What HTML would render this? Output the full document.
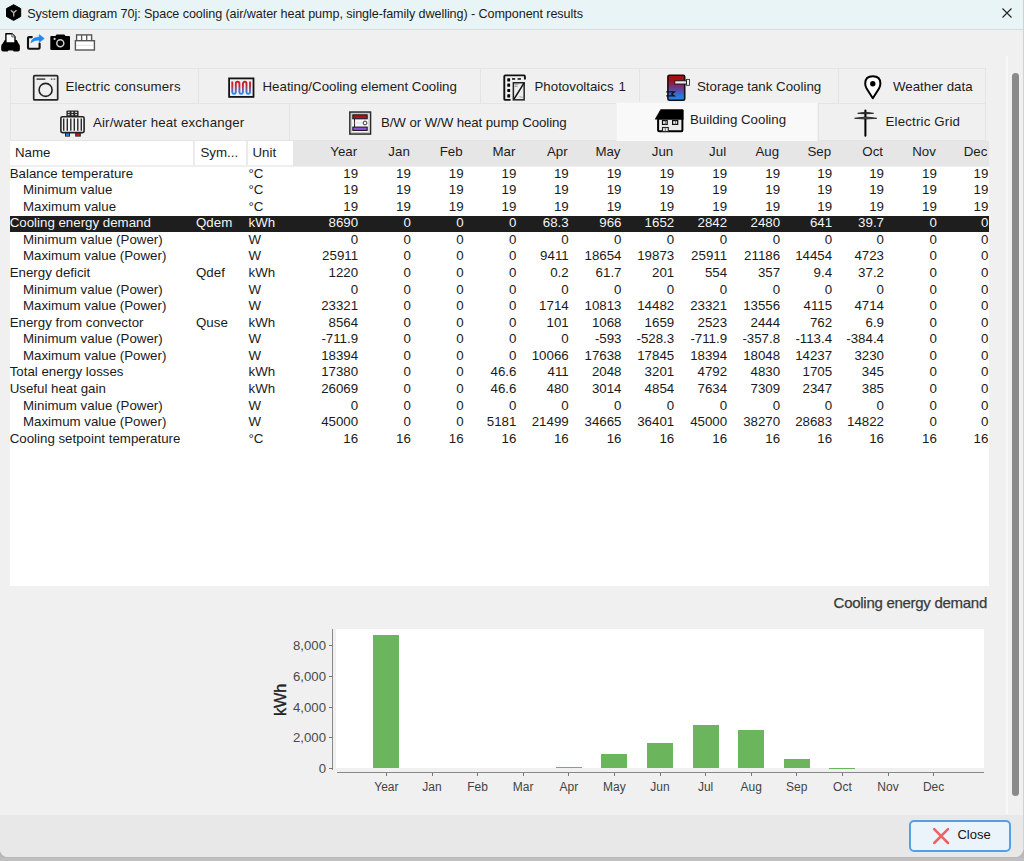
<!DOCTYPE html>
<html><head><meta charset="utf-8">
<style>
html,body{margin:0;padding:0;}
body{width:1024px;height:861px;position:relative;overflow:hidden;background:#b9b9b9;font-family:"Liberation Sans",sans-serif;color:#141414;}
#win{position:absolute;left:0;top:0;width:1023px;height:856.5px;background:#f0f0f0;border-radius:0 0 8px 8px;overflow:hidden;}
#rstrip{position:absolute;left:1023px;top:0;width:1px;height:850px;background:#d2d2d2;}
#bshadow{position:absolute;left:0;top:858px;width:1024px;height:3px;background:#c0c0c0;}
#title{position:absolute;left:0;top:0;width:1023px;height:29px;background:#e8f4f6;border-bottom:1px solid #d8dcdd;}
#title .t{position:absolute;left:27.3px;top:6.8px;font-size:12.6px;letter-spacing:-0.08px;color:#1b1b1b;white-space:nowrap;}
.abs{position:absolute;}
#tabs .tab{position:absolute;box-sizing:border-box;border:1px solid #e4e4e4;background:#f0f0f0;}
#tabs .tab.selt{background:#f9f9f9;border-color:#f2f2f2;border-bottom:none;}
#tabs .tl{position:absolute;font-size:13.3px;white-space:nowrap;color:#1c1c1c;}
#thead{position:absolute;left:0;top:0;width:1024px;height:1px;}
.hw{position:absolute;top:140.7px;height:24px;background:#fff;}
.hg{position:absolute;left:293px;top:140.7px;width:695.5px;height:25.3px;background:#e6e6e6;}
.hsep{position:absolute;top:140.7px;width:2px;height:24px;background:#ebebeb;}
.ht{position:absolute;top:145px;font-size:13.3px;white-space:nowrap;color:#1c1c1c;}
#tbody{position:absolute;left:9.5px;top:164.7px;width:979px;height:421px;background:#fff;border-top:2px solid #efefef;box-sizing:border-box;}
.row{position:absolute;left:0;top:0;width:1024px;height:16.57px;}
.row.sel .bg{display:none}
.c{position:absolute;top:0;font-size:13.3px;line-height:16.57px;white-space:nowrap;color:#1a1a1a;}
.selband{position:absolute;left:9.5px;width:979px;height:16px;background:#1e1e1e;}
.sel .c{color:#f4f4f4;}
.bar{position:absolute;width:26.2px;background:#6bb65c;}
.xt{position:absolute;top:772.5px;width:1px;height:3.5px;background:#777;}
.xl{position:absolute;top:780px;width:60px;text-align:center;font-size:12px;color:#444;}
.yl{position:absolute;right:697px;font-size:13.2px;color:#4a4a4a;white-space:nowrap;}
.yt{position:absolute;left:329px;width:4px;height:1px;background:#777;}
</style></head><body>
<div id="win">
  <div id="title">
    <svg class="abs" style="left:4px;top:2px" width="20" height="22" viewBox="4 2 20 22">
      <polygon points="13.6,4.7 20.7,8.6 20.7,16.5 13.6,20.4 6.5,16.5 6.5,8.6" fill="#000" stroke="#000" stroke-linejoin="round" stroke-width="1"/>
      <path d="M10.9 10.2 L13.7 12.8 L16.5 10.2 M13.7 12.8 V16.6" stroke="#b4b4b4" stroke-width="1.3" fill="none"/>
    </svg>
    <span class="t">System diagram 70j: Space cooling (air/water heat pump, single-family dwelling) - Component results</span>
    <svg class="abs" style="left:1002px;top:8px" width="10" height="10" viewBox="0 0 10 10"><path d="M0.5 0.5 L9.5 9.5 M9.5 0.5 L0.5 9.5" stroke="#222" stroke-width="1.1"/></svg>
  </div>

  <!-- toolbar -->
  <svg class="abs" style="left:0;top:30px" width="100" height="24" viewBox="0 30 100 24">
    <!-- printer -->
    <path d="M4.8 40 H16.8 L18.4 43.2 Q19.9 44.4 19.9 46.5 V49.6 Q19.9 51.6 17.9 51.6 H14.6 Q13.6 51.6 13 50.4 H8.4 Q7.8 51.6 6.6 51.6 H3.2 Q1.2 51.6 1.2 49.6 V46.5 Q1.2 44.4 2.8 43.2 Z" fill="#000"/>
    <path d="M5.9 33.7 H11.9 L15 36.8 V43 H5.9 Z" fill="#fff" stroke="#000" stroke-width="1.4" stroke-linejoin="round"/>
    <path d="M11.8 33.8 V36.9 H15" fill="#e0e0e0" stroke="#444" stroke-width="0.8"/>
    <!-- share -->
    <path d="M31.8 37.1 H29 Q28 37.1 28 38.1 V47.7 Q28 48.7 29 48.7 H38.6 Q39.6 48.7 39.6 47.7 V43.6" fill="none" stroke="#111" stroke-width="2.1" stroke-linecap="round"/>
    <path d="M30.8 42.8 Q31.6 37.3 39.2 37 V34.5 L44.3 38.5 L39.2 42.4 V40.1 Q34.2 40.1 30.8 42.8 Z" fill="#1e88f2" stroke="#1e88f2" stroke-width="0.5" stroke-linejoin="round"/>
    <!-- camera -->
    <path d="M51.3 35.9 H55.4 L56.6 34.5 H64.3 L65.6 35.9 H69 Q70 35.9 70 36.9 V48.9 Q70 49.9 69 49.9 H51.3 Q50.3 49.9 50.3 48.9 V36.9 Q50.3 35.9 51.3 35.9 Z" fill="#000"/>
    <circle cx="60.3" cy="43.25" r="3.5" fill="none" stroke="#cfcfcf" stroke-width="1.5"/>
    <circle cx="54.6" cy="38.9" r="1.1" fill="#d0d0d0"/>
    <!-- table icon -->
    <rect x="76.6" y="34.9" width="15" height="5.8" fill="#fff" stroke="#555" stroke-width="1.4"/>
    <path d="M81.6 34.9 V40.7 M86.7 34.9 V40.7" stroke="#555" stroke-width="1.3"/>
    <rect x="75.4" y="40.7" width="19" height="9.3" fill="#fff" stroke="#555" stroke-width="1.4"/>
    <path d="M76.2 45.3 H93.6" stroke="#e4e4e4" stroke-width="1"/>
  </svg>

  <!-- tabs -->
  <div id="tabs">
    <div class="tab" style="left:10px;top:68px;width:189px;height:36px"></div>
    <div class="tab" style="left:198px;top:68px;width:283px;height:36px"></div>
    <div class="tab" style="left:480px;top:68px;width:160px;height:36px"></div>
    <div class="tab" style="left:639px;top:68px;width:200px;height:36px"></div>
    <div class="tab" style="left:838px;top:68px;width:148px;height:36px"></div>
    <div class="tab" style="left:10px;top:103px;width:280px;height:38px"></div>
    <div class="tab" style="left:289px;top:103px;width:328px;height:38px"></div>
    <div class="tab" style="left:818px;top:103px;width:168px;height:38px"></div>
    <div class="tab selt" style="left:616px;top:102px;width:202px;height:39px"></div>

    <span class="tl" style="left:65.4px;top:79px;letter-spacing:0.17px">Electric consumers</span>
    <span class="tl" style="left:262.5px;top:79px">Heating/Cooling element Cooling</span>
    <span class="tl" style="left:534.5px;top:79px">Photovoltaics<span style="margin-left:5px">1</span></span>
    <span class="tl" style="left:697px;top:79px">Storage tank Cooling</span>
    <span class="tl" style="left:893px;top:79px">Weather data</span>
    <span class="tl" style="left:93px;top:115px;letter-spacing:0.15px">Air/water heat exchanger</span>
    <span class="tl" style="left:381px;top:115px;letter-spacing:-0.1px">B/W or W/W heat pump Cooling</span>
    <span class="tl" style="left:690px;top:111.5px">Building Cooling</span>
    <span class="tl" style="left:885.5px;top:113.8px;letter-spacing:0.17px">Electric Grid</span>

    <!-- washing machine -->
    <svg class="abs" style="left:30px;top:72px" width="32" height="32" viewBox="30 72 32 32">
      <rect x="33.7" y="75.7" width="24" height="24.2" rx="1" fill="#efefef" stroke="#262626" stroke-width="1.7"/>
      <path d="M36.5 79.1 H45.3" stroke="#333" stroke-width="1.4"/>
      <path d="M50.8 79.1 H52.4 M53.6 79.1 H55.2" stroke="#444" stroke-width="1.2"/>
      <circle cx="45.6" cy="89.9" r="6.5" fill="none" stroke="#222" stroke-width="1.6"/>
    </svg>
    <!-- heating element -->
    <svg class="abs" style="left:226px;top:75px" width="32" height="26" viewBox="226 75 32 26">
      <defs><linearGradient id="gh" gradientUnits="userSpaceOnUse" x1="0" y1="80.8" x2="0" y2="95"><stop offset="0" stop-color="#cc1e28"/><stop offset="0.33" stop-color="#c42430"/><stop offset="0.6" stop-color="#7c52a8"/><stop offset="0.85" stop-color="#2a88ee"/><stop offset="1" stop-color="#1e8af2"/></linearGradient></defs>
      <rect x="229.1" y="78.4" width="24.4" height="18.5" fill="#eeeeee" stroke="#141414" stroke-width="1.8"/>
      <path d="M232.3 81.6 V92.3 A1.77 1.77 0 0 0 235.8 92.3 V83.6 A1.77 1.77 0 0 1 239.4 83.6 V92.3 A1.77 1.77 0 0 0 242.9 92.3 V83.6 A1.77 1.77 0 0 1 246.5 83.6 V92.3 A1.77 1.77 0 0 0 250 92.3 V81.6" fill="none" stroke="url(#gh)" stroke-width="1.9"/>
    </svg>
    <!-- photovoltaics -->
    <svg class="abs" style="left:498px;top:70px" width="32" height="34" viewBox="498 70 32 34">
      <path d="M510.6 99.9 H505.3 Q504.3 99.9 504.3 98.9 V76.4 Q504.3 75.4 505.3 75.4 H523.9 Q524.9 75.4 524.9 76.4 V79.6" fill="none" stroke="#111" stroke-width="1.9"/>
      <rect x="507.3" y="78.3" width="2.8" height="3.2" rx="0.5" fill="#000"/>
      <rect x="507.3" y="83.5" width="2.8" height="3.2" rx="0.5" fill="#000"/>
      <rect x="507.3" y="88.9" width="2.8" height="3.2" rx="0.5" fill="#000"/>
      <rect x="507.3" y="94.2" width="2.8" height="3.4" rx="0.5" fill="#000"/>
      <rect x="512" y="78.1" width="3.2" height="1.7" fill="#222"/>
      <rect x="517.6" y="78.1" width="3.3" height="1.7" fill="#222"/>
      <rect x="513.35" y="82.75" width="10.8" height="17.1" fill="#ececec" stroke="#222" stroke-width="1.5"/>
      <path d="M514 99.2 L524.1 82.8" stroke="#111" stroke-width="1.5"/>
      <path d="M514.6 84 H518.6 M514.6 86.2 H517.6" stroke="#666" stroke-width="0.8"/>
      <path d="M519.5 96.5 Q521 97.5 522.8 97.3" stroke="#888" stroke-width="0.8" fill="none"/>
    </svg>
    <!-- storage tank -->
    <svg class="abs" style="left:664px;top:72px" width="28" height="32" viewBox="664 72 28 32">
      <defs><linearGradient id="gs" gradientUnits="userSpaceOnUse" x1="0" y1="75" x2="0" y2="100.5"><stop offset="0" stop-color="#b00a12"/><stop offset="0.22" stop-color="#a4101a"/><stop offset="0.5" stop-color="#6c3a8a"/><stop offset="0.75" stop-color="#3a6ad2"/><stop offset="1" stop-color="#1a8af6"/></linearGradient></defs>
      <rect x="667.9" y="75.2" width="16.8" height="25" rx="1.5" fill="url(#gs)" stroke="#111" stroke-width="1.6"/>
      <rect x="686.3" y="79.4" width="3.2" height="5.9" fill="#f0f0f0" stroke="#333" stroke-width="0.9"/>
      <rect x="674.8" y="80.8" width="11.6" height="3.2" fill="#ececec" stroke="#111" stroke-width="0.9"/>
      <path d="M666.2 91.9 H674.3 L671.6 93.9 L674.3 95.9 H666.2" fill="none" stroke="#111" stroke-width="1.2"/>
    </svg>
    <!-- weather pin -->
    <svg class="abs" style="left:862px;top:73px" width="22" height="29" viewBox="862 73 22 29">
      <path d="M872.8 98.2 L866.6 88.5 Q865.2 86.2 865.2 83.6 Q865.2 76.3 872.8 76.3 Q880.4 76.3 880.4 83.6 Q880.4 86.2 879 88.5 Z" fill="#fff" stroke="#000" stroke-width="2" stroke-linejoin="round"/>
      <circle cx="872.8" cy="83.8" r="2.7" fill="#000"/>
    </svg>
    <!-- air water heat exchanger -->
    <svg class="abs" style="left:58px;top:107px" width="30" height="32" viewBox="58 107 30 32">
      <rect x="66.4" y="110.4" width="12.2" height="6" rx="1.2" fill="#2a2a2a"/>
      <path d="M67.8 112.4 H69.6 M71.5 112.4 H73.3 M75.2 112.4 H77 M67.8 114.6 H69.6 M71.5 114.6 H73.3 M75.2 114.6 H77" stroke="#d8d8d8" stroke-width="1.1"/>
      <rect x="65" y="132.4" width="5" height="4.2" fill="#222"/>
      <rect x="75.2" y="132.4" width="5.6" height="4.2" fill="#222"/>
      <rect x="66" y="133" width="3" height="3" fill="#1a84ec"/>
      <rect x="76.2" y="133" width="3.6" height="3" fill="#c8141c"/>
      <rect x="60.9" y="116.8" width="23.2" height="15.8" rx="1.5" fill="#f4f4f4" stroke="#222" stroke-width="1.6"/>
      <path d="M63.7 118.6 V130.8 M67.3 118.6 V130.8 M70.8 118.6 V130.8 M74.3 118.6 V130.8 M77.8 118.6 V130.8 M81.3 118.6 V130.8" stroke="#2a2a2a" stroke-width="1.4"/>
    </svg>
    <!-- BW heat pump -->
    <svg class="abs" style="left:346px;top:108px" width="30" height="30" viewBox="346 108 30 30">
      <rect x="349.85" y="112.05" width="20.7" height="22" fill="#f6f6f6" stroke="#2a2a2a" stroke-width="1.5"/>
      <rect x="351.4" y="113.6" width="17.6" height="18.9" fill="none" stroke="#bdbdbd" stroke-width="0.8"/>
      <defs><linearGradient id="gr" x1="0" y1="0" x2="0" y2="1"><stop offset="0.5" stop-color="#b40e16"/><stop offset="1" stop-color="#5a3a8a"/></linearGradient></defs>
      <rect x="352.8" y="114.8" width="14.4" height="4" fill="url(#gr)" stroke="#111" stroke-width="1"/>
      <rect x="352.8" y="127.1" width="14.4" height="3.3" fill="#8a52e0" stroke="#111" stroke-width="1"/>
      <path d="M354.5 119 V127" stroke="#222" stroke-width="1"/>
      <circle cx="365" cy="123" r="1.9" fill="none" stroke="#222" stroke-width="0.9"/>
      <path d="M351.5 123 H363" stroke="#ccc" stroke-width="0.6"/>
    </svg>
    <!-- building -->
    <svg class="abs" style="left:653px;top:107px" width="33" height="28" viewBox="653 107 33 28">
      <rect x="658.1" y="118.5" width="24.3" height="12.8" rx="1" fill="#ececec" stroke="#000" stroke-width="2"/>
      <path d="M660.7 109.5 H682.4 Q683.4 109.5 683.4 110.5 V119.2 H655.1 Z" fill="#000" stroke="#000" stroke-width="0.5" stroke-linejoin="round"/>
      <rect x="662.5" y="120.6" width="4.7" height="3.8" fill="#f4f4f4" stroke="#111" stroke-width="1.2"/>
      <path d="M665.3 120.6 V124.4" stroke="#555" stroke-width="0.8"/>
      <rect x="672.6" y="120.6" width="5.1" height="3.8" fill="#f4f4f4" stroke="#111" stroke-width="1.2"/>
      <path d="M675.6 120.6 V124.4" stroke="#555" stroke-width="0.8"/>
      <rect x="662.5" y="127.5" width="5.8" height="4" fill="#e6e6e6" stroke="#222" stroke-width="1.1"/>
      <path d="M665.3 127.5 V131.5" stroke="#555" stroke-width="0.8"/>
    </svg>
    <!-- electric pole -->
    <svg class="abs" style="left:852px;top:107px" width="27" height="32" viewBox="852 107 27 32">
      <path d="M865.4 110.4 V135.8" stroke="#000" stroke-width="2" stroke-linecap="round"/>
      <path d="M857.7 113.3 Q865.6 111.2 873.6 113.3 Q865.6 114.6 857.7 113.3 Z" fill="#444" stroke="#111" stroke-width="0.7"/>
      <path d="M854.5 118.3 Q865.6 115.6 876.8 118.3 Q865.6 119.8 854.5 118.3 Z" fill="#555" stroke="#111" stroke-width="0.7"/>
    </svg>
  </div>

  <!-- table -->
  <div id="tbody"></div>
  <div class="selband" style="top:216.3px"></div>
<div id="thead"><div class="hw" style="left:9.5px;width:283.5px"></div><div class="hg"></div><div class="hsep" style="left:193px"></div><div class="hsep" style="left:245.5px"></div><span class="ht" style="left:15px">Name</span><span class="ht" style="left:200.5px">Sym...</span><span class="ht" style="left:252.5px">Unit</span><span class="ht r" style="top:143.5px;right:666.9px">Year</span><span class="ht r" style="top:143.5px;right:614.2px">Jan</span><span class="ht r" style="top:143.5px;right:561.4px">Feb</span><span class="ht r" style="top:143.5px;right:508.6px">Mar</span><span class="ht r" style="top:143.5px;right:456.3px">Apr</span><span class="ht r" style="top:143.5px;right:403.5px">May</span><span class="ht r" style="top:143.5px;right:350.8px">Jun</span><span class="ht r" style="top:143.5px;right:297.9px">Jul</span><span class="ht r" style="top:143.5px;right:244.9px">Aug</span><span class="ht r" style="top:143.5px;right:192.9px">Sep</span><span class="ht r" style="top:143.5px;right:141px">Oct</span><span class="ht r" style="top:143.5px;right:88.1px">Nov</span><span class="ht r" style="top:143.5px;right:36.6px">Dec</span></div>
<div class="row" style="top:165.6px"><span class="c" style="left:9.7px">Balance temperature</span><span class="c" style="left:248.5px">°C</span><span class="c" style="right:665.9px">19</span><span class="c" style="right:613.2px">19</span><span class="c" style="right:560.4px">19</span><span class="c" style="right:507.6px">19</span><span class="c" style="right:455.3px">19</span><span class="c" style="right:402.5px">19</span><span class="c" style="right:349.8px">19</span><span class="c" style="right:296.9px">19</span><span class="c" style="right:243.9px">19</span><span class="c" style="right:191.9px">19</span><span class="c" style="right:140px">19</span><span class="c" style="right:87.1px">19</span><span class="c" style="right:35.6px">19</span></div>
<div class="row" style="top:182.17px"><span class="c" style="left:23px">Minimum value</span><span class="c" style="left:248.5px">°C</span><span class="c" style="right:665.9px">19</span><span class="c" style="right:613.2px">19</span><span class="c" style="right:560.4px">19</span><span class="c" style="right:507.6px">19</span><span class="c" style="right:455.3px">19</span><span class="c" style="right:402.5px">19</span><span class="c" style="right:349.8px">19</span><span class="c" style="right:296.9px">19</span><span class="c" style="right:243.9px">19</span><span class="c" style="right:191.9px">19</span><span class="c" style="right:140px">19</span><span class="c" style="right:87.1px">19</span><span class="c" style="right:35.6px">19</span></div>
<div class="row" style="top:198.74px"><span class="c" style="left:23px">Maximum value</span><span class="c" style="left:248.5px">°C</span><span class="c" style="right:665.9px">19</span><span class="c" style="right:613.2px">19</span><span class="c" style="right:560.4px">19</span><span class="c" style="right:507.6px">19</span><span class="c" style="right:455.3px">19</span><span class="c" style="right:402.5px">19</span><span class="c" style="right:349.8px">19</span><span class="c" style="right:296.9px">19</span><span class="c" style="right:243.9px">19</span><span class="c" style="right:191.9px">19</span><span class="c" style="right:140px">19</span><span class="c" style="right:87.1px">19</span><span class="c" style="right:35.6px">19</span></div>
<div class="row sel" style="top:215.31px"><span class="c" style="left:9.7px">Cooling energy demand</span><span class="c" style="left:196px">Qdem</span><span class="c" style="left:248.5px">kWh</span><span class="c" style="right:665.9px">8690</span><span class="c" style="right:613.2px">0</span><span class="c" style="right:560.4px">0</span><span class="c" style="right:507.6px">0</span><span class="c" style="right:455.3px">68.3</span><span class="c" style="right:402.5px">966</span><span class="c" style="right:349.8px">1652</span><span class="c" style="right:296.9px">2842</span><span class="c" style="right:243.9px">2480</span><span class="c" style="right:191.9px">641</span><span class="c" style="right:140px">39.7</span><span class="c" style="right:87.1px">0</span><span class="c" style="right:35.6px">0</span></div>
<div class="row" style="top:231.88px"><span class="c" style="left:23px">Minimum value (Power)</span><span class="c" style="left:248.5px">W</span><span class="c" style="right:665.9px">0</span><span class="c" style="right:613.2px">0</span><span class="c" style="right:560.4px">0</span><span class="c" style="right:507.6px">0</span><span class="c" style="right:455.3px">0</span><span class="c" style="right:402.5px">0</span><span class="c" style="right:349.8px">0</span><span class="c" style="right:296.9px">0</span><span class="c" style="right:243.9px">0</span><span class="c" style="right:191.9px">0</span><span class="c" style="right:140px">0</span><span class="c" style="right:87.1px">0</span><span class="c" style="right:35.6px">0</span></div>
<div class="row" style="top:248.45px"><span class="c" style="left:23px">Maximum value (Power)</span><span class="c" style="left:248.5px">W</span><span class="c" style="right:665.9px">25911</span><span class="c" style="right:613.2px">0</span><span class="c" style="right:560.4px">0</span><span class="c" style="right:507.6px">0</span><span class="c" style="right:455.3px">9411</span><span class="c" style="right:402.5px">18654</span><span class="c" style="right:349.8px">19873</span><span class="c" style="right:296.9px">25911</span><span class="c" style="right:243.9px">21186</span><span class="c" style="right:191.9px">14454</span><span class="c" style="right:140px">4723</span><span class="c" style="right:87.1px">0</span><span class="c" style="right:35.6px">0</span></div>
<div class="row" style="top:265.02px"><span class="c" style="left:9.7px">Energy deficit</span><span class="c" style="left:196px">Qdef</span><span class="c" style="left:248.5px">kWh</span><span class="c" style="right:665.9px">1220</span><span class="c" style="right:613.2px">0</span><span class="c" style="right:560.4px">0</span><span class="c" style="right:507.6px">0</span><span class="c" style="right:455.3px">0.2</span><span class="c" style="right:402.5px">61.7</span><span class="c" style="right:349.8px">201</span><span class="c" style="right:296.9px">554</span><span class="c" style="right:243.9px">357</span><span class="c" style="right:191.9px">9.4</span><span class="c" style="right:140px">37.2</span><span class="c" style="right:87.1px">0</span><span class="c" style="right:35.6px">0</span></div>
<div class="row" style="top:281.59px"><span class="c" style="left:23px">Minimum value (Power)</span><span class="c" style="left:248.5px">W</span><span class="c" style="right:665.9px">0</span><span class="c" style="right:613.2px">0</span><span class="c" style="right:560.4px">0</span><span class="c" style="right:507.6px">0</span><span class="c" style="right:455.3px">0</span><span class="c" style="right:402.5px">0</span><span class="c" style="right:349.8px">0</span><span class="c" style="right:296.9px">0</span><span class="c" style="right:243.9px">0</span><span class="c" style="right:191.9px">0</span><span class="c" style="right:140px">0</span><span class="c" style="right:87.1px">0</span><span class="c" style="right:35.6px">0</span></div>
<div class="row" style="top:298.16px"><span class="c" style="left:23px">Maximum value (Power)</span><span class="c" style="left:248.5px">W</span><span class="c" style="right:665.9px">23321</span><span class="c" style="right:613.2px">0</span><span class="c" style="right:560.4px">0</span><span class="c" style="right:507.6px">0</span><span class="c" style="right:455.3px">1714</span><span class="c" style="right:402.5px">10813</span><span class="c" style="right:349.8px">14482</span><span class="c" style="right:296.9px">23321</span><span class="c" style="right:243.9px">13556</span><span class="c" style="right:191.9px">4115</span><span class="c" style="right:140px">4714</span><span class="c" style="right:87.1px">0</span><span class="c" style="right:35.6px">0</span></div>
<div class="row" style="top:314.73px"><span class="c" style="left:9.7px">Energy from convector</span><span class="c" style="left:196px">Quse</span><span class="c" style="left:248.5px">kWh</span><span class="c" style="right:665.9px">8564</span><span class="c" style="right:613.2px">0</span><span class="c" style="right:560.4px">0</span><span class="c" style="right:507.6px">0</span><span class="c" style="right:455.3px">101</span><span class="c" style="right:402.5px">1068</span><span class="c" style="right:349.8px">1659</span><span class="c" style="right:296.9px">2523</span><span class="c" style="right:243.9px">2444</span><span class="c" style="right:191.9px">762</span><span class="c" style="right:140px">6.9</span><span class="c" style="right:87.1px">0</span><span class="c" style="right:35.6px">0</span></div>
<div class="row" style="top:331.3px"><span class="c" style="left:23px">Minimum value (Power)</span><span class="c" style="left:248.5px">W</span><span class="c" style="right:665.9px">-711.9</span><span class="c" style="right:613.2px">0</span><span class="c" style="right:560.4px">0</span><span class="c" style="right:507.6px">0</span><span class="c" style="right:455.3px">0</span><span class="c" style="right:402.5px">-593</span><span class="c" style="right:349.8px">-528.3</span><span class="c" style="right:296.9px">-711.9</span><span class="c" style="right:243.9px">-357.8</span><span class="c" style="right:191.9px">-113.4</span><span class="c" style="right:140px">-384.4</span><span class="c" style="right:87.1px">0</span><span class="c" style="right:35.6px">0</span></div>
<div class="row" style="top:347.87px"><span class="c" style="left:23px">Maximum value (Power)</span><span class="c" style="left:248.5px">W</span><span class="c" style="right:665.9px">18394</span><span class="c" style="right:613.2px">0</span><span class="c" style="right:560.4px">0</span><span class="c" style="right:507.6px">0</span><span class="c" style="right:455.3px">10066</span><span class="c" style="right:402.5px">17638</span><span class="c" style="right:349.8px">17845</span><span class="c" style="right:296.9px">18394</span><span class="c" style="right:243.9px">18048</span><span class="c" style="right:191.9px">14237</span><span class="c" style="right:140px">3230</span><span class="c" style="right:87.1px">0</span><span class="c" style="right:35.6px">0</span></div>
<div class="row" style="top:364.44px"><span class="c" style="left:9.7px">Total energy losses</span><span class="c" style="left:248.5px">kWh</span><span class="c" style="right:665.9px">17380</span><span class="c" style="right:613.2px">0</span><span class="c" style="right:560.4px">0</span><span class="c" style="right:507.6px">46.6</span><span class="c" style="right:455.3px">411</span><span class="c" style="right:402.5px">2048</span><span class="c" style="right:349.8px">3201</span><span class="c" style="right:296.9px">4792</span><span class="c" style="right:243.9px">4830</span><span class="c" style="right:191.9px">1705</span><span class="c" style="right:140px">345</span><span class="c" style="right:87.1px">0</span><span class="c" style="right:35.6px">0</span></div>
<div class="row" style="top:381.01px"><span class="c" style="left:9.7px">Useful heat gain</span><span class="c" style="left:248.5px">kWh</span><span class="c" style="right:665.9px">26069</span><span class="c" style="right:613.2px">0</span><span class="c" style="right:560.4px">0</span><span class="c" style="right:507.6px">46.6</span><span class="c" style="right:455.3px">480</span><span class="c" style="right:402.5px">3014</span><span class="c" style="right:349.8px">4854</span><span class="c" style="right:296.9px">7634</span><span class="c" style="right:243.9px">7309</span><span class="c" style="right:191.9px">2347</span><span class="c" style="right:140px">385</span><span class="c" style="right:87.1px">0</span><span class="c" style="right:35.6px">0</span></div>
<div class="row" style="top:397.58px"><span class="c" style="left:23px">Minimum value (Power)</span><span class="c" style="left:248.5px">W</span><span class="c" style="right:665.9px">0</span><span class="c" style="right:613.2px">0</span><span class="c" style="right:560.4px">0</span><span class="c" style="right:507.6px">0</span><span class="c" style="right:455.3px">0</span><span class="c" style="right:402.5px">0</span><span class="c" style="right:349.8px">0</span><span class="c" style="right:296.9px">0</span><span class="c" style="right:243.9px">0</span><span class="c" style="right:191.9px">0</span><span class="c" style="right:140px">0</span><span class="c" style="right:87.1px">0</span><span class="c" style="right:35.6px">0</span></div>
<div class="row" style="top:414.15px"><span class="c" style="left:23px">Maximum value (Power)</span><span class="c" style="left:248.5px">W</span><span class="c" style="right:665.9px">45000</span><span class="c" style="right:613.2px">0</span><span class="c" style="right:560.4px">0</span><span class="c" style="right:507.6px">5181</span><span class="c" style="right:455.3px">21499</span><span class="c" style="right:402.5px">34665</span><span class="c" style="right:349.8px">36401</span><span class="c" style="right:296.9px">45000</span><span class="c" style="right:243.9px">38270</span><span class="c" style="right:191.9px">28683</span><span class="c" style="right:140px">14822</span><span class="c" style="right:87.1px">0</span><span class="c" style="right:35.6px">0</span></div>
<div class="row" style="top:430.72px"><span class="c" style="left:9.7px">Cooling setpoint temperature</span><span class="c" style="left:248.5px">°C</span><span class="c" style="right:665.9px">16</span><span class="c" style="right:613.2px">16</span><span class="c" style="right:560.4px">16</span><span class="c" style="right:507.6px">16</span><span class="c" style="right:455.3px">16</span><span class="c" style="right:402.5px">16</span><span class="c" style="right:349.8px">16</span><span class="c" style="right:296.9px">16</span><span class="c" style="right:243.9px">16</span><span class="c" style="right:191.9px">16</span><span class="c" style="right:140px">16</span><span class="c" style="right:87.1px">16</span><span class="c" style="right:35.6px">16</span></div>

  <!-- scrollbar -->
  <div class="abs" style="left:1006px;top:56px;width:1.5px;height:758px;background:#f8f8f8"></div>
  <div class="abs" style="left:1012px;top:73px;width:7px;height:723px;border-radius:3.5px;background:#8a8a8a"></div>

  <!-- chart -->
  <span class="abs" style="right:36px;top:593.5px;font-size:15px;letter-spacing:-0.28px;color:#3a3a3a;-webkit-text-stroke:0.25px #3a3a3a;white-space:nowrap">Cooling energy demand</span>
  <div class="abs" style="left:335.5px;top:629px;width:648px;height:139px;background:#fff"></div>
  <div class="abs" style="left:332.2px;top:628.8px;width:1.2px;height:141px;background:#8c8c8c"></div>
  <div class="abs" style="left:337px;top:772px;width:647px;height:1px;background:#888"></div>
  <span class="abs" style="left:271px;top:716px;font-size:16.2px;font-weight:normal;-webkit-text-stroke:0.35px #222;color:#222;transform:rotate(-90deg);transform-origin:0 0;white-space:nowrap">kWh</span>
<div class="bar" style="left:373.3px;top:634.89px;height:133.61px"></div>
<div class="bar" style="left:555.7px;top:767.45px;height:1.05px"></div>
<div class="bar" style="left:601.3px;top:753.65px;height:14.85px"></div>
<div class="bar" style="left:646.9px;top:743.1px;height:25.4px"></div>
<div class="bar" style="left:692.5px;top:724.8px;height:43.7px"></div>
<div class="bar" style="left:738.1px;top:730.37px;height:38.13px"></div>
<div class="bar" style="left:783.7px;top:758.64px;height:9.86px"></div>
<div class="bar" style="left:829.3px;top:767.89px;height:0.61px"></div>
<div class="xt" style="left:385.9px"></div>
<div class="xt" style="left:431.5px"></div>
<div class="xt" style="left:477.1px"></div>
<div class="xt" style="left:522.7px"></div>
<div class="xt" style="left:568.3px"></div>
<div class="xt" style="left:613.9px"></div>
<div class="xt" style="left:659.5px"></div>
<div class="xt" style="left:705.1px"></div>
<div class="xt" style="left:750.7px"></div>
<div class="xt" style="left:796.3px"></div>
<div class="xt" style="left:841.9px"></div>
<div class="xt" style="left:887.5px"></div>
<div class="xt" style="left:933.1px"></div>
<span class="xl" style="left:356.4px">Year</span>
<span class="xl" style="left:402px">Jan</span>
<span class="xl" style="left:447.6px">Feb</span>
<span class="xl" style="left:493.2px">Mar</span>
<span class="xl" style="left:538.8px">Apr</span>
<span class="xl" style="left:584.4px">May</span>
<span class="xl" style="left:630px">Jun</span>
<span class="xl" style="left:675.6px">Jul</span>
<span class="xl" style="left:721.2px">Aug</span>
<span class="xl" style="left:766.8px">Sep</span>
<span class="xl" style="left:812.4px">Oct</span>
<span class="xl" style="left:858px">Nov</span>
<span class="xl" style="left:903.6px">Dec</span>
<span class="yl" style="top:761.2px">0</span><div class="yt" style="top:768px"></div>
<span class="yl" style="top:730.45px">2,000</span><div class="yt" style="top:737.25px"></div>
<span class="yl" style="top:699.7px">4,000</span><div class="yt" style="top:706.5px"></div>
<span class="yl" style="top:668.95px">6,000</span><div class="yt" style="top:675.75px"></div>
<span class="yl" style="top:638.2px">8,000</span><div class="yt" style="top:645px"></div>

  <!-- bottom bar -->
  <div class="abs" style="left:0;top:814.5px;width:1023px;height:42px;background:#e8e8e8"></div>
  <div class="abs" style="left:909px;top:820px;width:102px;height:32px;box-sizing:border-box;border:2px solid #55a0e2;border-radius:5px;background:#ebf3fb"></div>
  <svg class="abs" style="left:932px;top:826.5px" width="18" height="18" viewBox="0 0 18 18"><path d="M2.2 2.2 L16 16 M16 2.2 L2.2 16" stroke="#ef6262" stroke-width="2.5" stroke-linecap="round"/></svg>
  <span class="abs" style="left:957.4px;top:826.5px;font-size:13px;color:#141414">Close</span>
</div>
<div id="rstrip"></div>
<div id="bshadow"></div>
</body></html>
